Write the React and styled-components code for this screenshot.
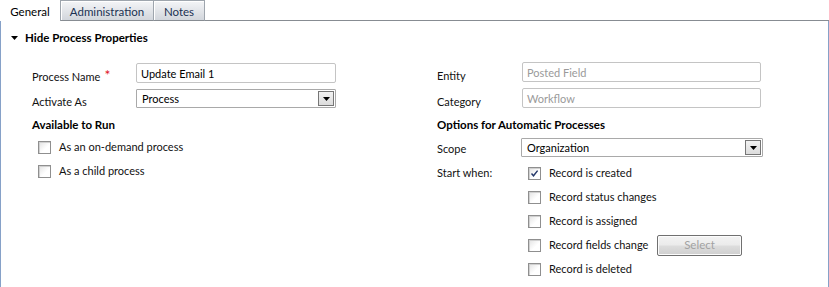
import React from "react";
import styled, { createGlobalStyle, css } from "styled-components";

const Global = createGlobalStyle`
  html, body { margin: 0; padding: 0; background: #fff; }
  body { font-family: Lato, "Open Sans", sans-serif; font-size: 11px; color: #111; }
`;

const Frame = styled.div`
  width: 829px;
  height: 287px;
  display: flex;
  flex-direction: column;
  background: #fff;
  overflow: hidden;
`;

const TabStrip = styled.div`
  display: flex;
  height: 21px;
  flex: none;
`;

const Tab = styled.div`
  width: ${(p) => p.$w}px;
  box-sizing: border-box;
  display: flex;
  align-items: center;
  justify-content: center;
  padding-top: 1px;
  font-size: 11.5px;
  ${(p) =>
    p.$active
      ? css`
          background: #fff;
          color: #000;
        `
      : css`
          background: linear-gradient(#f4f5f7, #d2d6dc);
          border-top: 1px solid #9ea5ad;
          border-right: 1px solid #9ea5ad;
          border-left: ${p.$first ? "1px solid #9ea5ad" : "0"};
          border-bottom: 1px solid #878c92;
          box-shadow: inset 1px 1px 0 #ffffff;
          color: #1b3152;
        `}
`;

const TabFiller = styled.div`
  flex: 1;
  border-bottom: 1px solid #878c92;
`;

const Panel = styled.div`
  flex: 1;
  border-left: 1px solid #86a1c8;
  border-right: 1px solid #86a1c8;
  padding: 9px 0 0 10px;
`;

const SectionToggle = styled.div`
  display: flex;
  align-items: center;
  gap: 7px;
  height: 16px;
  line-height: 16px;
  font-weight: 700;
  font-size: 11.5px;
  color: #000;
`;

const Form = styled.div`
  display: grid;
  grid-template-columns: 405px 1fr;
  margin-top: 16px;
  padding-left: 21px;
`;

const Column = styled.div`
  display: flex;
  flex-direction: column;
`;

const FieldRow = styled.div`
  display: flex;
  align-items: flex-start;
  height: ${(p) => p.$h || 26}px;
`;

const Label = styled.div`
  width: ${(p) => p.$w}px;
  flex: none;
  margin-top: 6px;
  line-height: 16px;
  white-space: nowrap;
`;

const Required = styled.span`
  color: #e0161e;
  margin-left: 4px;
  font-size: 14px;
  position: relative;
  top: -1px;
`;

const TextBox = styled.div`
  width: ${(p) => p.$w}px;
  height: 20px;
  margin-top: ${(p) => (p.$mt !== undefined ? p.$mt : 1)}px;
  box-sizing: border-box;
  border: 1px solid #c4c4c4;
  border-radius: 2px;
  padding: 0 4px;
  display: flex;
  align-items: center;
  color: ${(p) => (p.$disabled ? "#9a9a9a" : "#000")};
  white-space: nowrap;
`;

const SelectBox = styled.div`
  width: ${(p) => p.$w}px;
  height: 19px;
  margin-top: ${(p) => p.$mt}px;
  box-sizing: border-box;
  border: 1px solid #a9a9a9;
  border-radius: 1px;
  padding: 0 1px 0 5px;
  display: flex;
  align-items: center;
  justify-content: space-between;
  color: #000;
`;

const DropButton = styled.div`
  width: 16px;
  height: 15px;
  box-sizing: border-box;
  border: 1px solid #767676;
  background: linear-gradient(#f2f2f2, #dcdcdc);
  display: flex;
  align-items: center;
  justify-content: center;
`;

const GroupTitle = styled.div`
  height: 21px;
  box-sizing: border-box;
  padding-top: 3px;
  line-height: 16px;
  font-weight: 700;
  font-size: 11.5px;
  color: #000;
`;

const CheckRow = styled.div`
  display: flex;
  align-items: center;
  gap: 8px;
  height: 24px;
  padding-left: ${(p) => p.$indent || 0}px;
  line-height: 16px;
  white-space: nowrap;
`;

const Box = styled.div`
  width: 13px;
  height: 13px;
  flex: none;
  box-sizing: border-box;
  border: 1px solid #8f8f8f;
  background: linear-gradient(135deg, #e2e2e2 0%, #ffffff 60%);
  box-shadow: inset 1px 1px 0 #d0d0d0;
  display: flex;
  align-items: center;
  justify-content: center;
`;

const StartWhen = styled.div`
  display: flex;
  align-items: flex-start;
`;

const StartLabel = styled.div`
  width: 91px;
  flex: none;
  height: 24px;
  display: flex;
  align-items: center;
  line-height: 16px;
`;

const OptionList = styled.div`
  width: 214px;
  display: flex;
  flex-direction: column;
`;

const PickButton = styled.div`
  margin-left: auto;
  width: 85px;
  height: 21px;
  flex: none;
  box-sizing: border-box;
  border: 1px solid #707070;
  border-radius: 2px;
  background: linear-gradient(#f3f3f3 0%, #ebebeb 48%, #dddddd 52%, #cfcfcf 100%);
  box-shadow: inset 0 0 0 1px #fcfcfc;
  color: #a2a2a2;
  font-size: 11.5px;
  display: flex;
  align-items: center;
  justify-content: center;
`;

const Caret = () => (
  <svg width="7" height="4" viewBox="0 0 7 4">
    <path d="M0 0H7L3.5 4Z" fill="#000" />
  </svg>
);

const Check = ({ checked }) => (
  <Box>
    {checked && (
      <svg width="9" height="9" viewBox="0 0 9 9">
        <path d="M1.5 4.5L3.5 6.8L7.6 1.6" fill="none" stroke="#24386a" strokeWidth="1.4" />
      </svg>
    )}
  </Box>
);

const Select = ({ w, mt, children }) => (
  <SelectBox $w={w} $mt={mt}>
    <span>{children}</span>
    <DropButton>
      <Caret />
    </DropButton>
  </SelectBox>
);

export default function App() {
  const options = [
    { label: "Record is created", checked: true },
    { label: "Record status changes" },
    { label: "Record is assigned" },
    { label: "Record fields change", button: true },
    { label: "Record is deleted" },
  ];
  return (
    <>
      <Global />
      <Frame>
        <TabStrip>
          <Tab $w={60} $active>General</Tab>
          <Tab $w={94} $first>Administration</Tab>
          <Tab $w={51}>Notes</Tab>
          <TabFiller />
        </TabStrip>
        <Panel>
          <SectionToggle>
            <Caret />
            <span>Hide Process Properties</span>
          </SectionToggle>
          <Form>
            <Column>
              <FieldRow>
                <Label $w={104}>
                  Process Name<Required>*</Required>
                </Label>
                <TextBox $w={200}>Update Email 1</TextBox>
              </FieldRow>
              <FieldRow>
                <Label $w={104}>Activate As</Label>
                <Select w={200} mt={1}>Process</Select>
              </FieldRow>
              <GroupTitle>Available to Run</GroupTitle>
              <CheckRow $indent={6}>
                <Check />
                <span>As an on-demand process</span>
              </CheckRow>
              <CheckRow $indent={6}>
                <Check />
                <span>As a child process</span>
              </CheckRow>
            </Column>
            <Column>
              <FieldRow>
                <Label $w={85}>Entity</Label>
                <TextBox $w={239} $mt={0} $disabled>Posted Field</TextBox>
              </FieldRow>
              <FieldRow>
                <Label $w={85}>Category</Label>
                <TextBox $w={239} $mt={0} $disabled>Workflow</TextBox>
              </FieldRow>
              <GroupTitle>Options for Automatic Processes</GroupTitle>
              <FieldRow>
                <Label $w={84}>Scope</Label>
                <Select w={242} mt={3}>Organization</Select>
              </FieldRow>
              <StartWhen>
                <StartLabel>Start when:</StartLabel>
                <OptionList>
                  {options.map((o) => (
                    <CheckRow key={o.label}>
                      <Check checked={o.checked} />
                      <span>{o.label}</span>
                      {o.button && <PickButton>Select</PickButton>}
                    </CheckRow>
                  ))}
                </OptionList>
              </StartWhen>
            </Column>
          </Form>
        </Panel>
      </Frame>
    </>
  );
}
